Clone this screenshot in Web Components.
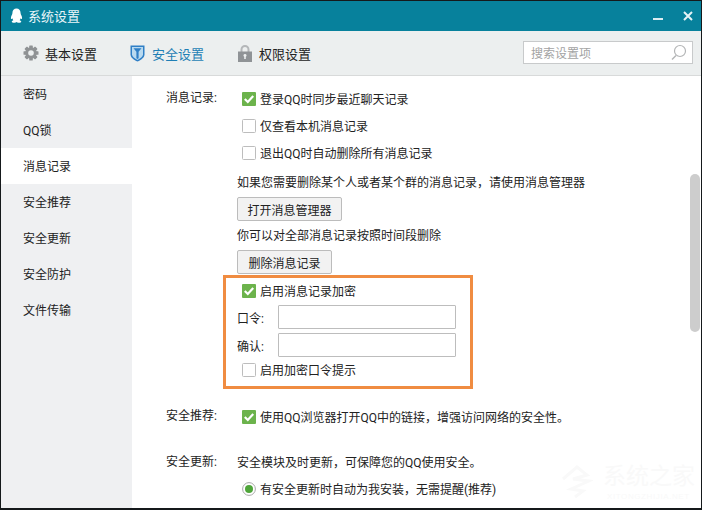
<!DOCTYPE html>
<html lang="zh">
<head>
<meta charset="utf-8">
<title>系统设置</title>
<style>
  html, body { margin: 0; padding: 0; background: #fff; }
  body { font: 12px Roboto, "Noto Sans CJK SC", sans-serif; color: #222; }
</style>
</head>
<body>
<qq-window>
  <qq-titlebar slot="title">系统设置</qq-titlebar>
  <qq-toolbar slot="tools">
    <qq-tab icon="gear">基本设置</qq-tab>
    <qq-tab icon="shield" active>安全设置</qq-tab>
    <qq-tab icon="lock">权限设置</qq-tab>
    <qq-search slot="search">搜索设置项</qq-search>
  </qq-toolbar>
  <qq-sidebar slot="side">
    <qq-navitem>密码</qq-navitem>
    <qq-navitem>QQ锁</qq-navitem>
    <qq-navitem active>消息记录</qq-navitem>
    <qq-navitem>安全推荐</qq-navitem>
    <qq-navitem>安全更新</qq-navitem>
    <qq-navitem>安全防护</qq-navitem>
    <qq-navitem>文件传输</qq-navitem>
  </qq-sidebar>

  <qq-section label="消息记录:">
    <qq-check checked>登录QQ时同步最近聊天记录</qq-check>
    <qq-check>仅查看本机消息记录</qq-check>
    <qq-check>退出QQ时自动删除所有消息记录</qq-check>
    <qq-note style="margin-top:3px">如果您需要删除某个人或者某个群的消息记录，请使用消息管理器</qq-note>
    <qq-button style="width:105px;margin-top:3px">打开消息管理器</qq-button>
    <qq-note style="margin-top:4px">你可以对全部消息记录按照时间段删除</qq-note>
    <qq-button style="width:95px;margin-top:3px">删除消息记录</qq-button>
    <qq-callout>
      <qq-check checked style="margin-bottom:3px">启用消息记录加密</qq-check>
      <qq-field label="口令:"></qq-field>
      <qq-field label="确认:" style="margin-top:4px"></qq-field>
      <qq-check style="margin:2px 0 0">启用加密口令提示</qq-check>
    </qq-callout>
  </qq-section>

  <qq-section label="安全推荐:" style="margin-top:17px">
    <qq-check checked>使用QQ浏览器打开QQ中的链接，增强访问网络的安全性。</qq-check>
  </qq-section>

  <qq-section label="安全更新:" style="margin-top:19px">
    <qq-note>安全模块及时更新，可保障您的QQ使用安全。</qq-note>
    <qq-radio checked>有安全更新时自动为我安装，无需提醒(推荐)</qq-radio>
  </qq-section>

  <qq-watermark slot="overlay">系统之家</qq-watermark>
  <qq-scrollthumb slot="overlay"></qq-scrollthumb>
</qq-window>

<script>
function shadow(el, html) {
  el.attachShadow({ mode: "open" }).innerHTML = html;
}

const gearTeeth = [0, 45, 90, 135].map(a =>
  `<rect x="6.200" y="0.500" width="3.600" height="15" rx=".6" fill="#8f9294" transform="rotate(${a} 8 8)"/>`
).join("");

const ICONS = {
  gear: `<svg width="16" height="16" viewBox="0 0 16 16">${gearTeeth}<circle cx="8" cy="8" r="5.800" fill="#8f9294"/><circle cx="8" cy="8" r="2.800" fill="#ecefef"/></svg>`,
  shield: `<svg width="15" height="17" viewBox="0 0 15 17"><path fill="#2f7fc6" d="M.5.500h14v9c0 3-3.500 5.500-7 7-3.500-1.500-7-4-7-7z"/><path fill="#b9daf0" d="M2 2h11v7.300c0 2.300-2.700 4.300-5.500 5.600C4.700 13.600 2 11.600 2 9.300z"/><path fill="#2f7fc6" d="M3.500 3.200h8L8.600 6.800v6.500l-1.100.6-1.100-.6V6.800z"/></svg>`,
  lock: `<svg width="14" height="17" viewBox="0 0 14 17"><path fill="none" stroke="#b4b7b9" stroke-width="2" d="M3.500 7V4.500a3.500 3.500 0 0 1 7 0V7"/><path fill="#8f9396" fill-rule="evenodd" d="M0 6.500h14V17H0zM7 9a1.500 1.500 0 0 0-.8 2.800V14h1.600v-2.200A1.500 1.500 0 0 0 7 9z"/></svg>`
};

class QqWindow extends HTMLElement {
  constructor() {
    super();
    shadow(this, `
      <style>
        :host { display: block; width: 702px; height: 510px; box-sizing: border-box; border: 1px solid #15191b; border-bottom-width: 2px; position: relative; overflow: hidden; background: #fff; }
        .frame { display: flex; flex-direction: column; height: 100%; }
        .body { flex: 1; display: flex; min-height: 0; }
        .main { flex: 1; padding: 12px 0 0 34px; overflow: hidden; display: flex; flex-direction: column; }
      </style>
      <div class="frame">
        <slot name="title"></slot>
        <slot name="tools"></slot>
        <div class="body">
          <slot name="side"></slot>
          <div class="main"><slot></slot></div>
        </div>
      </div>
      <slot name="overlay"></slot>
    `);
  }
}

class QqTitlebar extends HTMLElement {
  constructor() {
    super();
    shadow(this, `
      <style>
        :host { display: flex; align-items: center; height: 30px; background: #07819c; color: #eaf6f9; font-size: 13px; padding: 0 8px 0 9px; flex: none; }
        .t { margin-left: 5px; flex: 1; padding-bottom: 2px; }
        svg { display: block; }
        .min { width: 10px; height: 2px; background: #dcecf1; margin: 6px 20px 0 0; }
        .x { margin-top: -1px; }
      </style>
      <svg width="13" height="16" viewBox="0 0 14 17"><path fill="#fff" d="M7 .5c2.700 0 4.300 2 4.400 4.700.1 1.300.500 1.900 1 3 .7 1.600.8 3.300.2 3.600-.4.2-.8-.3-1.100-.9-.2.900-.6 1.600-1.100 2.100.9.400 1.800.9 1.700 1.600-.1.800-1.600 1.200-3.100 1.100-.9-.1-1.500-.4-2-.7-.5.300-1.100.6-2 .7-1.500.1-3-.3-3.100-1.100-.1-.7.8-1.200 1.700-1.600-.5-.5-.9-1.200-1.100-2.100-.3.600-.7 1.100-1.100.9-.6-.3-.5-2 .2-3.600.5-1.100.9-1.700 1-3C2.700 2.500 4.300.5 7 .5z"/></svg>
      <span class="t"><slot></slot></span>
      <span class="min"></span>
      <svg class="x" width="10" height="10" viewBox="0 0 10 10"><path stroke="#e6f3f6" stroke-width="2" d="M1 1l8 8M9 1l-8 8"/></svg>
    `);
  }
}

class QqToolbar extends HTMLElement {
  constructor() {
    super();
    shadow(this, `
      <style>
        :host { display: flex; align-items: center; height: 44px; background: #ecefef; border-bottom: 1px solid #d8dada; flex: none; padding-left: 21px; gap: 32px; }
        .s { margin-left: auto; }
      </style>
      <slot></slot>
      <span class="s"><slot name="search"></slot></span>
    `);
  }
}

class QqTab extends HTMLElement {
  constructor() {
    super();
    const on = this.hasAttribute("active");
    shadow(this, `
      <style>
        :host { display: flex; align-items: center; gap: 6px; font-size: 13px; color: ${on ? "#1f7fb5" : "#222"}; }
        .i { width: 17px; height: 20px; display: flex; align-items: center; justify-content: center; }
        svg { display: block; }
      </style>
      <span class="i">${ICONS[this.getAttribute("icon")]}</span>
      <slot></slot>
    `);
  }
}

class QqSearch extends HTMLElement {
  constructor() {
    super();
    shadow(this, `
      <style>
        :host { display: flex; align-items: center; justify-content: space-between; box-sizing: border-box; width: 170px; height: 23px; margin: 0 8px 2px 0; border: 1px solid #c8cacb; background: #fff; color: #a3a3a3; padding: 0 5px 0 7px; }
      </style>
      <slot></slot>
      <svg width="17" height="17" viewBox="0 0 17 17"><circle cx="10" cy="7" r="5.500" fill="none" stroke="#b3b5b6" stroke-width="1.200"/><path stroke="#b3b5b6" stroke-width="1.400" d="M6 11.500l-4 4"/></svg>
    `);
  }
}

class QqSidebar extends HTMLElement {
  constructor() {
    super();
    shadow(this, `
      <style>
        :host { display: block; width: 131px; background: #eff0f2; flex: none; }
      </style>
      <slot></slot>
    `);
  }
}

class QqNavitem extends HTMLElement {
  constructor() {
    super();
    const on = this.hasAttribute("active");
    shadow(this, `
      <style>
        :host { display: flex; align-items: center; box-sizing: border-box; height: 36px; padding: 0 0 2px 22px; background: ${on ? "#fff" : "transparent"}; color: #222; }
      </style>
      <slot></slot>
    `);
  }
}

class QqSection extends HTMLElement {
  constructor() {
    super();
    shadow(this, `
      <style>
        :host { display: grid; grid-template-columns: 71px 1fr; flex: none; }
        .l { line-height: 20px; color: #222; }
        .c { display: flex; flex-direction: column; align-items: flex-start; }
      </style>
      <div class="l">${this.getAttribute("label")}</div>
      <div class="c"><slot></slot></div>
    `);
  }
}

const BOX = (on) => on
  ? `<svg width="14" height="14" viewBox="0 0 14 14"><rect width="14" height="14" rx="1" fill="#6cb34c"/><path fill="none" stroke="#fff" stroke-width="2.200" d="M2.800 7l3 3 5.400-6"/></svg>`
  : `<svg width="14" height="14" viewBox="0 0 14 14"><rect x=".5" y=".5" width="13" height="13" rx="1" fill="#fff" stroke="#bdbdbd"/></svg>`;

class QqCheck extends HTMLElement {
  constructor() {
    super();
    shadow(this, `
      <style>
        :host { display: flex; align-items: center; gap: 4px; height: 22px; margin-bottom: 5px; padding-left: 5px; color: #222; white-space: nowrap; }
        svg { display: block; flex: none; }
        .t { padding-bottom: 2px; }
      </style>
      ${BOX(this.hasAttribute("checked"))}
      <span class="t"><slot></slot></span>
    `);
  }
}

class QqRadio extends HTMLElement {
  constructor() {
    super();
    shadow(this, `
      <style>
        :host { display: flex; align-items: center; gap: 4px; height: 22px; padding-left: 5px; margin-top: 4px; color: #222; white-space: nowrap; }
        svg { display: block; flex: none; }
        .t { padding-bottom: 2px; }
      </style>
      <svg width="14" height="14" viewBox="0 0 14 14"><circle cx="7" cy="7" r="6.400" fill="#fff" stroke="#a9a9a9"/><circle cx="7" cy="7" r="4" fill="#4fa53a"/></svg>
      <span class="t"><slot></slot></span>
    `);
  }
}

class QqNote extends HTMLElement {
  constructor() {
    super();
    shadow(this, `
      <style>
        :host { display: block; line-height: 22px; color: #222; white-space: nowrap; }
      </style>
      <slot></slot>
    `);
  }
}

class QqButton extends HTMLElement {
  constructor() {
    super();
    shadow(this, `
      <style>
        :host { display: flex; align-items: center; justify-content: center; box-sizing: border-box; height: 24px; border: 1px solid #bcbcbc; border-radius: 2px; background: #f2f2f2; color: #222; }
      </style>
      <slot></slot>
    `);
  }
}

class QqCallout extends HTMLElement {
  constructor() {
    super();
    shadow(this, `
      <style>
        :host { display: flex; flex-direction: column; box-sizing: border-box; width: 250px; height: 114px; margin: 1px 0 0 -14px; padding: 2px 0 0 11px; border: 3px solid #f08c41; }
      </style>
      <slot></slot>
    `);
  }
}

class QqField extends HTMLElement {
  constructor() {
    super();
    shadow(this, `
      <style>
        :host { display: flex; align-items: center; height: 24px; color: #222; }
        .l { width: 41px; flex: none; }
        .i { width: 178px; height: 24px; box-sizing: border-box; border: 1px solid #bdbdbd; border-radius: 1px; background: #fff; }
      </style>
      <span class="l">${this.getAttribute("label")}</span>
      <span class="i"></span>
    `);
  }
}

class QqScrollthumb extends HTMLElement {
  constructor() {
    super();
    shadow(this, `
      <style>
        :host { position: absolute; left: 689px; top: 173px; width: 10px; height: 158px; background: #cdcdcd; border-radius: 5px; }
      </style>
    `);
  }
}

class QqWatermark extends HTMLElement {
  constructor() {
    super();
    shadow(this, `
      <style>
        :host { position: absolute; left: 560px; top: 462px; width: 136px; height: 42px; color: #f9f9f9; white-space: nowrap; }
        svg { position: absolute; left: 0; top: 2px; }
        .n { position: absolute; left: 42px; top: 0; font-size: 23px; line-height: 28px; }
        .u { position: absolute; left: 46px; top: 29px; font: 8px/10px "Liberation Sans", sans-serif; letter-spacing: .6px; }
      </style>
      <svg width="32" height="34" viewBox="0 0 32 34"><path fill="none" stroke="#f9f9f9" stroke-width="3" d="M2 14L16 2l10 8-14 4 16 2-18 8 12 2-8 6"/></svg>
      <span class="n"><slot></slot></span>
      <span class="u">XITONGZHIJIA.NET</span>
    `);
  }
}

customElements.define("qq-window", QqWindow);
customElements.define("qq-titlebar", QqTitlebar);
customElements.define("qq-toolbar", QqToolbar);
customElements.define("qq-tab", QqTab);
customElements.define("qq-search", QqSearch);
customElements.define("qq-sidebar", QqSidebar);
customElements.define("qq-navitem", QqNavitem);
customElements.define("qq-section", QqSection);
customElements.define("qq-check", QqCheck);
customElements.define("qq-radio", QqRadio);
customElements.define("qq-note", QqNote);
customElements.define("qq-button", QqButton);
customElements.define("qq-callout", QqCallout);
customElements.define("qq-field", QqField);
customElements.define("qq-scrollthumb", QqScrollthumb);
customElements.define("qq-watermark", QqWatermark);
</script>
</body>
</html>
